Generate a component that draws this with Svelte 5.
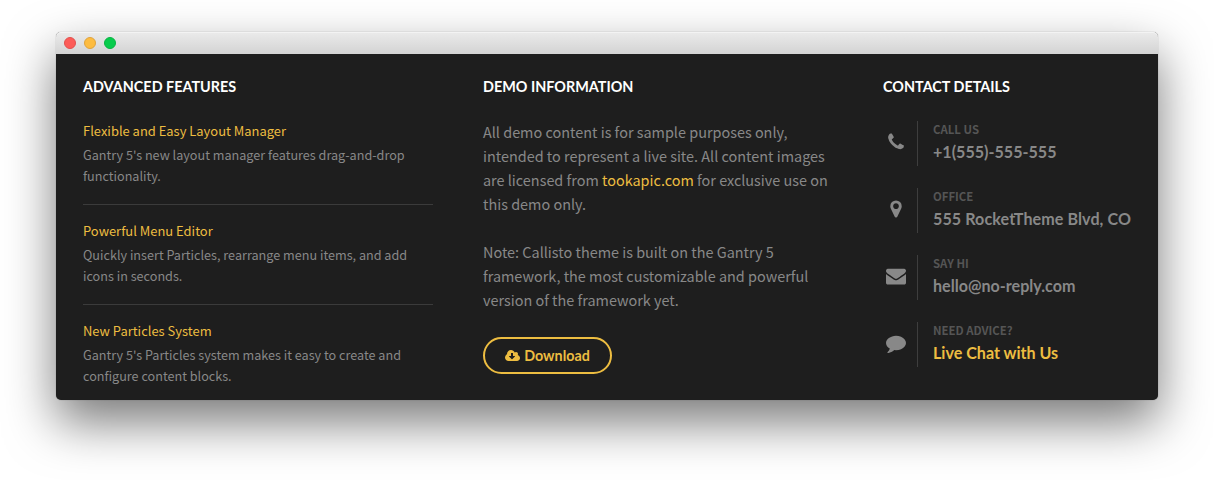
<script>
  const features = [
    { title: 'Flexible and Easy Layout Manager', lines: ["Gantry 5's new layout manager features drag-and-drop", 'functionality.'] },
    { title: 'Powerful Menu Editor', lines: ['Quickly insert Particles, rearrange menu items, and add', 'icons in seconds.'] },
    { title: 'New Particles System', lines: ["Gantry 5's Particles system makes it easy to create and", 'configure content blocks.'] }
  ];
  const contacts = [
    { label: 'CALL US', value: '+1(555)-555-555', icon: 'M1600 1240q0 27-10 70.5t-21 68.5q-21 50-122 106-94 51-186 51-27 0-53-3.5t-57.5-12.5-47-14.5-55.5-20.5-49-18q-98-35-175-83-127-79-264-216t-216-264q-48-77-83-175-3-9-18-49t-20.5-55.5-14.5-47-12.5-57.5-3.5-53q0-92 51-186 56-101 106-122 25-11 68.5-21t70.5-10q14 0 21 3 18 6 53 76 11 19 30 54t35 63.5 31 53.5q3 4 17.5 25t21.5 35.5 7 28.5q0 20-28.5 50t-62 55-62 53-28.5 46q0 9 5 22.5t8.5 20.5 14 24 11.5 19q76 137 174 235t235 174q2 1 19 11.5t24 14 20.5 8.5 22.5 5q18 0 46-28.5t53-62 55-62 50-28.5q14 0 28.5 7t35.5 21.5 25 17.5q25 15 53.5 31t63.5 35 54 30q70 35 76 53 3 7 3 21z' },
    { label: 'OFFICE', value: '555 RocketTheme Blvd, CO', wide: true, icon: 'M1152 640q0-106-75-181t-181-75-181 75-75 181 75 181 181 75 181-75 75-181zm256 0q0 109-33 179l-364 774q-16 33-47.5 52t-67.5 19-67.5-19-46.5-52l-365-774q-33-70-33-179 0-212 150-362t362-150 362 150 150 362z' },
    { label: 'SAY HI', value: 'hello@no-reply.com', icon: 'M1792 710v794q0 66-47 113t-113 47h-1472q-66 0-113-47t-47-113v-794q44 49 101 87 362 246 497 345 57 42 92.5 65.5t94.5 48 110 24.5h2q51 0 110-24.5t94.5-48 92.5-65.5q170-123 498-345 57-39 100-87zm0-294q0 79-49 151t-122 123q-376 261-468 325-10 7-42.5 31t-54 38.5-52 32.5-57.5 27-50 9h-2q-23 0-50-9t-57.5-27-52-32.5-54-38.5-42.5-31q-91-64-262-182.5t-205-142.5q-62-42-117-115.5t-55-136.5q0-78 41.5-130t118.5-52h1472q65 0 112.5 47t47.5 113z' },
    { label: 'NEED ADVICE?', value: 'Live Chat with Us', link: true, icon: 'M1792 896q0 174-120 321.5t-326 233-450 85.5q-70 0-145-8-198 175-460 242-49 14-114 22-17 2-30.5-9t-17.5-29v-1q-3-4-.5-12t2-10 4.5-9.5l6-9 7-8.5 8-9q7-8 31-34.5t34.5-38 31-39.5 32.5-51 27-59 26-76q-157-89-247.5-220t-90.5-281q0-130 71-248.5t191-204.5 286-136.5 348-50.5q244 0 450 85.5t326 233 120 321.5z' }
  ];
</script>

<div class="window">
  <header><i class="red"></i><i class="amber"></i><i class="green"></i></header>
  <main>
    <section>
      <h2>ADVANCED FEATURES</h2>
      {#each features as f}
        <article>
          <h3>{f.title}</h3>
          <p>{f.lines[0]}<br />{f.lines[1]}</p>
        </article>
      {/each}
    </section>
    <section>
      <h2>DEMO INFORMATION</h2>
      <div class="copy">
        <p>All demo content is for sample purposes only,<br />intended to represent a live site. All content images<br />are licensed from <a href="#top">tookapic.com</a> for exclusive use on<br />this demo only.</p>
        <p>Note: Callisto theme is built on the Gantry 5<br />framework, the most customizable and powerful<br />version of the framework yet.</p>
      </div>
      <button>
        <svg width="15" height="14" viewBox="0 0 1920 1792"><path d="M1280 928q0-14-9-23t-23-9h-224v-352q0-13-9.5-22.5t-22.5-9.5h-192q-13 0-22.5 9.5t-9.5 22.5v352h-224q-13 0-22.5 9.5t-9.5 22.5q0 14 9 23l352 352q9 9 23 9t23-9l351-351q10-12 10-24zm640 224q0 159-112.5 271.5t-271.5 112.5h-1088q-185 0-316.5-131.5t-131.5-316.5q0-130 70-240t188-165q-2-30-2-43 0-212 150-362t362-150q156 0 285.5 87t188.5 231q71-62 166-62 106 0 181 75t75 181q0 76-41 138 130 31 213.5 135.5t83.5 238.5z" /></svg>
        <span>Download</span>
      </button>
    </section>
    <section>
      <h2>CONTACT DETAILS</h2>
      <div class="contacts">
        {#each contacts as c}
          <div class="contact">
            <svg width="20" height="20" viewBox="0 0 1792 1792"><path d={c.icon} /></svg>
            <div class="detail">
              <span class="label">{c.label}</span>
              <span class="value" class:link={c.link} class:wide={c.wide}>{c.value}</span>
            </div>
          </div>
        {/each}
      </div>
    </section>
  </main>
</div>

<style>
  :global(body) { background: #fff; overflow: hidden; }
  :global(#app) { display: flow-root; }
  .window {
    box-sizing: border-box;
    width: 1102px;
    height: 368px;
    margin: 32px 56px 80px;
    border-radius: 5px;
    background: #1e1e1e;
    box-shadow: 0 0 1px rgba(0, 0, 0, 0.45), 0 22px 50px rgba(0, 0, 0, 0.53);
    font-family: 'Noto Sans CJK SC', sans-serif;
    white-space: nowrap;
  }
  header {
    box-sizing: border-box;
    display: flex;
    align-items: center;
    gap: 8px;
    height: 22px;
    padding-left: 8px;
    border-radius: 5px 5px 0 0;
    background: linear-gradient(#ebebeb, #d3d3d3);
    box-shadow: inset 0 1px #f3f3f3;
  }
  header i { box-sizing: border-box; width: 12px; height: 12px; border-radius: 50%; border: 1px solid; }
  .red { background: #fc5b57; border-color: #e2504d; }
  .amber { background: #fdbc40; border-color: #e0a33c; }
  .green { background: #07cc4c; border-color: #07b442; }
  main {
    display: grid;
    grid-template-columns: 350px 350px 250px;
    gap: 50px;
    padding: 23px 27px 0;
  }
  h2 { margin: 0 0 23px; font: 700 14.4px/20px Lato, sans-serif; color: #fff; }
  h3 { margin: 0; font-size: 12.95px; font-weight: 400; line-height: 21px; color: #edbd41; }
  p { margin: 0; }
  article { height: 84px; color: #888; }
  article + article { padding-top: 15px; border-top: 1px solid #3b3b3b; }
  article p { margin-top: 3px; font-size: 12.63px; line-height: 21px; }
  .copy { display: grid; gap: 24px; color: #888; font-size: 14.43px; line-height: 24px; }
  a { color: #edbd41; text-decoration: none; }
  button {
    box-sizing: border-box;
    display: flex;
    align-items: center;
    justify-content: center;
    gap: 4px;
    width: 129px;
    height: 37px;
    margin-top: 25px;
    padding: 0;
    border: 2px solid #edbd41;
    border-radius: 19px;
    background: none;
    color: #edbd41;
    font: 700 14.3px/20px Lato, sans-serif;
  }
  svg { flex: none; fill: currentColor; }
  .contacts { display: grid; gap: 22px; margin-top: 24px; }
  .contact { display: flex; align-items: center; height: 45px; padding-left: 3px; color: #888; }
  .contact svg { margin-bottom: 4px; }
  .detail { display: flex; flex-direction: column; height: 45px; margin-left: 11px; padding-left: 15px; border-left: 1px solid #3e3e3e; }
  .label { height: 18px; font-size: 11.4px; font-weight: 700; line-height: 16px; color: #555; }
  .value { font: 700 16.1px/26px Lato, sans-serif; }
  .wide { letter-spacing: 0.08px; }
  .link { color: #edbd41; }
</style>
